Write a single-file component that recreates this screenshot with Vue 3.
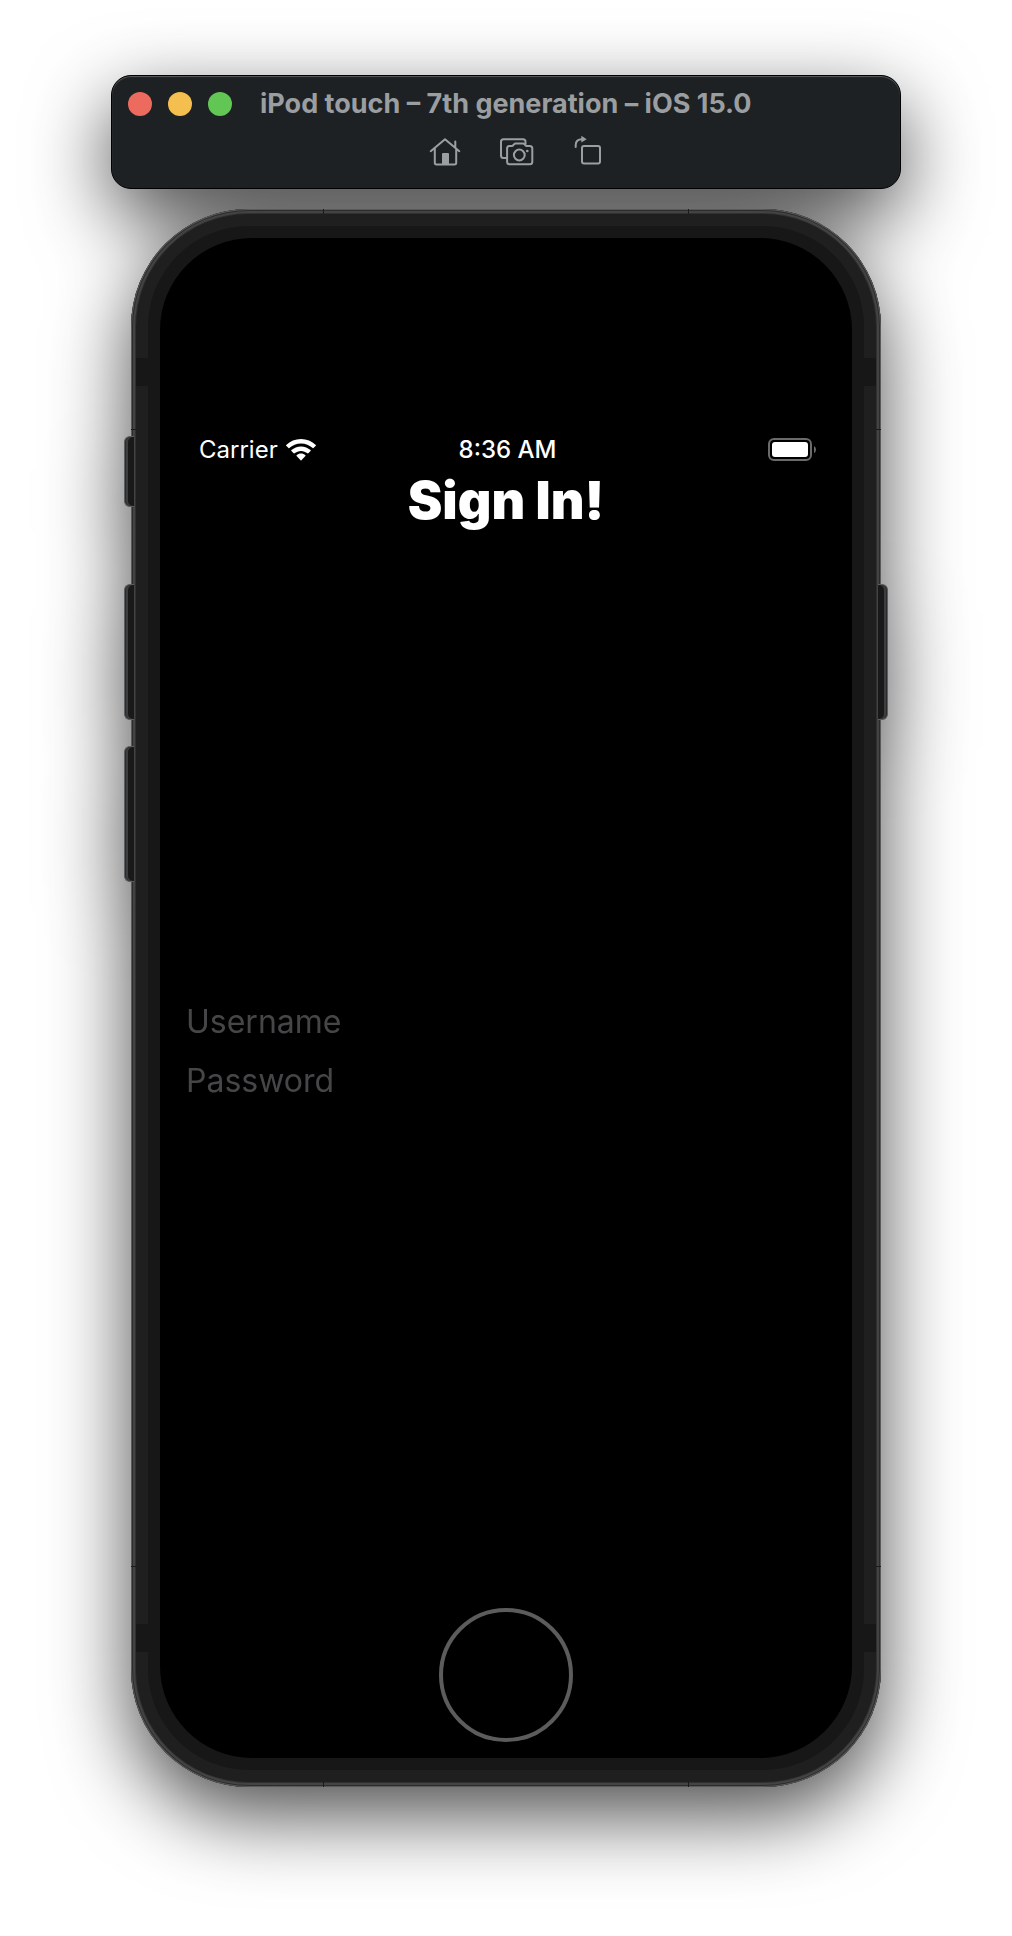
<script setup>
import { ref } from 'vue'

const username = ref('')
const password = ref('')
</script>

<template>
  <main class="simulator">
    <header class="toolbar">
      <div class="title-row">
        <div class="lights">
          <button class="light red" type="button" aria-label="Close"></button>
          <button class="light yellow" type="button" aria-label="Minimize"></button>
          <button class="light green" type="button" aria-label="Zoom"></button>
        </div>
        <h1 class="window-title">iPod touch – 7th generation – iOS 15.0</h1>
      </div>
      <div class="tools">
        <button class="tool" type="button" aria-label="Home">
          <svg width="36" height="34" viewBox="0 0 36 34">
            <path d="M3.7 17.2 18 5.2l14.300 12M7.800 14.500v14.300q0 1.700 1.700 1.700h18q1.700 0 1.700-1.700V14.500M28.300 13V7.500" />
            <path class="solid" d="M15 20q0-1 1-1h5q1 0 1 1v11h-7z" />
          </svg>
        </button>
        <button class="tool" type="button" aria-label="Screenshot">
          <svg width="40" height="34" viewBox="0 0 40 34">
            <path d="M9.500 24H6.500Q4 24 4 21.500V7.700q0-2.500 2.500-2.500H26q2.500 0 2.500 2.500v2" />
            <path d="M12.300 12h2.400q1 0 1.600-.9l.7-.8q.6-.8 1.600-.8h7.400q1 0 1.600.8l.7.8q.6.9 1.600.9h2.900q2.500 0 2.500 2.500v13.300q0 2.500-2.500 2.500H12.600q-2.500 0-2.500-2.500V14.500q0-2.500 2.200-2.500z" />
            <circle cx="22.300" cy="21" r="5.400" />
            <circle class="solid" cx="30.300" cy="17" r="1.300" />
          </svg>
        </button>
        <button class="tool" type="button" aria-label="Rotate">
          <svg width="36" height="34" viewBox="0 0 36 34">
            <rect x="11" y="12" width="18" height="17.500" rx="2" />
            <path d="M4.700 13v-2q0-5.500 6.300-5.700" />
            <path class="solid" d="M10.300 1.800 15.700 5.200l-5.400 3.400z" />
          </svg>
        </button>
      </div>
    </header>

    <section class="phone">
      <div class="shell">
        <span class="seam across high"></span>
        <span class="seam across low"></span>
        <span class="seam down near"></span>
        <span class="seam down far"></span>
        <div class="band">
          <span class="antenna upper"></span>
          <span class="antenna lower"></span>
          <div class="bezel">
            <div class="screen">
              <div class="status">
                <div class="carrier">
                  <span>Carrier</span>
                  <svg width="30" height="22" viewBox="0 0 30 22" fill="#fff">
                    <path d="M15 0C9.300 0 4.100 2.200.2 5.900q-.4.4 0 .8l2.300 2.400q.4.4.8 0C6.400 6.200 10.500 4.500 15 4.500s8.600 1.700 11.700 4.600q.4.400.8 0l2.300-2.400q.4-.4 0-.8C25.900 2.200 20.700 0 15 0z" />
                    <path d="M15 7.400c-3.700 0-7 1.400-9.600 3.700q-.4.400 0 .8l2.300 2.400q.4.400.8 0c1.800-1.500 4.100-2.400 6.500-2.400s4.700.9 6.500 2.400q.4.400.8 0l2.300-2.400q.4-.4 0-.8C22 8.800 18.700 7.400 15 7.400z" />
                    <path d="M15 14.600c-1.700 0-3.200.6-4.400 1.600q-.4.400 0 .8l4 4.200q.4.400.8 0l4-4.200q.4-.4 0-.8c-1.200-1-2.700-1.600-4.400-1.600z" />
                  </svg>
                </div>
                <time class="clock">8:36 AM</time>
                <svg class="battery" width="48" height="24" viewBox="0 0 48 24">
                  <rect x="1" y="1" width="42" height="21" rx="5" fill="none" stroke="#6b6b6b" stroke-width="2" />
                  <rect x="4" y="4" width="36" height="15" rx="3" fill="#fff" />
                  <path d="M46 8q2 1 2 3.500T46 15z" fill="#6b6b6b" />
                </svg>
              </div>
              <h2 class="heading">Sign In!</h2>
              <form class="form" @submit.prevent>
                <input v-model="username" type="text" placeholder="Username" aria-label="Username" autocomplete="off" />
                <input v-model="password" type="password" placeholder="Password" aria-label="Password" autocomplete="off" />
              </form>
              <div class="home-area">
                <button class="home" type="button" aria-label="Home button"></button>
              </div>
            </div>
          </div>
        </div>
      </div>
      <span class="key mute"></span>
      <span class="key volume-up"></span>
      <span class="key volume-down"></span>
      <span class="key power"></span>
    </section>
  </main>
</template>

<style>
body {
  margin: 0;
  background: #fff;
}
</style>

<style scoped>
.simulator {
  box-sizing: border-box;
  padding: 75px 111px 150px;
  font-family: Inter, "Liberation Sans", sans-serif;
  filter: drop-shadow(0 28px 40px rgba(0, 0, 0, 0.7));
}

button {
  padding: 0;
  border: 0;
  background: none;
}

.toolbar {
  box-sizing: border-box;
  height: 114px;
  border: 1px solid #000;
  border-radius: 20px;
  background: #1d2123;
  box-shadow: inset 0 1px 1px #5a5e60;
}

.title-row {
  display: flex;
  align-items: center;
  gap: 28px;
  height: 56px;
  padding-left: 16px;
}

.lights {
  display: flex;
  gap: 16px;
}

.light {
  width: 24px;
  height: 24px;
  border-radius: 50%;
}

.red {
  background: #ed6a5f;
}

.yellow {
  background: #f5bf4f;
}

.green {
  background: #62c655;
}

.window-title {
  margin: 0;
  color: #9b9ea1;
  font-size: 27px;
  font-weight: 700;
  line-height: 32px;
  white-space: nowrap;
}

.tools {
  display: flex;
  justify-content: center;
  gap: 34px;
  padding: 2px 0 0 22px;
}

.tool svg {
  display: block;
  fill: none;
  stroke: #9c9fa2;
  stroke-width: 2;
  stroke-linecap: round;
  stroke-linejoin: round;
}

.tool .solid {
  fill: #9c9fa2;
  stroke: none;
}

.phone {
  position: relative;
  margin: 20px 20px 0;
}

.shell {
  position: relative;
  padding: 5px;
  border-radius: 118px;
  background: #303030;
  box-shadow: inset 0 0 0 1px #5a5a5a, inset 0 0 0 2px #2c2c2c, inset 0 0 0 4px #434343;
}

.band {
  position: relative;
  padding: 12px;
  border-radius: 113px;
  background: #1f1f1f;
}

.bezel {
  position: relative;
  padding: 12px;
  border-radius: 101px;
  background: #171717;
}

.antenna {
  position: absolute;
  left: 0;
  right: 0;
  height: 28px;
  background: #171717;
}

.upper {
  top: 144px;
}

.lower {
  bottom: 130px;
}

.seam {
  position: absolute;
  background: #1a1a1a;
}

.across {
  left: 0;
  right: 0;
  height: 1px;
}

.high {
  top: 220px;
}

.low {
  bottom: 220px;
}

.down {
  top: 0;
  bottom: 0;
  width: 1px;
}

.near {
  left: 192px;
}

.far {
  right: 192px;
}

.key {
  box-sizing: border-box;
  position: absolute;
  left: -7px;
  width: 10px;
  height: 136px;
  border: 1px solid #5c5e5f;
  border-right: 0;
  border-radius: 6px 0 0 6px;
  background: #191919;
  box-shadow: inset 1px 0 0 #2a2c2d, inset 3px 0 0 #3c3e3f;
}

.mute {
  top: 227px;
  height: 71px;
}

.volume-up {
  top: 375px;
}

.volume-down {
  top: 537px;
}

.power {
  top: 375px;
  left: auto;
  right: -7px;
  border-right: 1px solid #5c5e5f;
  border-left: 0;
  border-radius: 0 6px 6px 0;
  box-shadow: inset -1px 0 0 #2a2c2d, inset -3px 0 0 #3c3e3f;
}

.screen {
  box-sizing: border-box;
  display: flex;
  flex-direction: column;
  min-height: 1520px;
  padding-top: 188px;
  border-radius: 92px;
  background: #000;
  color: #fff;
}

.status {
  display: grid;
  grid-template-columns: 1fr auto 1fr;
  align-items: center;
  height: 48px;
  padding: 0 36px 0 39px;
  font-size: 24px;
  line-height: 30px;
}

.carrier {
  display: flex;
  align-items: center;
  gap: 8px;
}

.clock {
  font-weight: 500;
}

.battery {
  justify-self: end;
}

.heading {
  margin: 0;
  font-size: 52px;
  font-weight: 900;
  line-height: 54px;
  text-align: center;
}

.form {
  flex: 1;
  display: flex;
  flex-direction: column;
  justify-content: center;
}

.form input {
  box-sizing: border-box;
  width: 100%;
  height: 59px;
  padding: 0 26px;
  border: 0;
  outline: 0;
  background: transparent;
  color: #fff;
  font-family: inherit;
  font-size: 32px;
}

.form input::placeholder {
  color: #464648;
  opacity: 1;
}

.home-area {
  display: flex;
  justify-content: center;
  padding: 34px 0 16px;
}

.home {
  box-sizing: border-box;
  width: 134px;
  height: 134px;
  border: 4px solid #5c5c5c;
  border-radius: 50%;
}
</style>
